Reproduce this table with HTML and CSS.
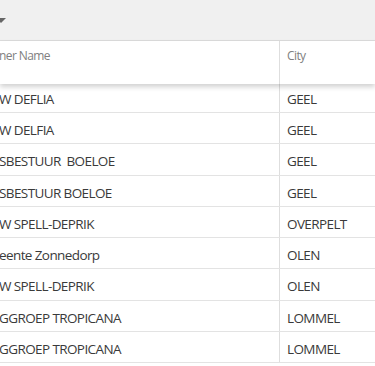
FILE: index.html
```html
<!DOCTYPE html>
<html>
<head>
<meta charset="utf-8">
<link rel="stylesheet" href="styles.css">
</head>
<body>
<div class="toolbar"><span class="caret"></span></div>
<div class="grid">
  <div class="grid-header">
    <div class="cell name head">ner Name</div>
    <div class="cell city head">City</div>
  </div>
  <div class="grid-body">
    <div class="row"><div class="cell name">W DEFLIA</div><div class="cell city">GEEL</div></div>
    <div class="row"><div class="cell name">W DELFIA</div><div class="cell city">GEEL</div></div>
    <div class="row"><div class="cell name">SBESTUUR&nbsp; BOELOE</div><div class="cell city">GEEL</div></div>
    <div class="row"><div class="cell name">SBESTUUR BOELOE</div><div class="cell city">GEEL</div></div>
    <div class="row"><div class="cell name">W SPELL-DEPRIK</div><div class="cell city">OVERPELT</div></div>
    <div class="row"><div class="cell name">eente Zonnedorp</div><div class="cell city">OLEN</div></div>
    <div class="row"><div class="cell name">W SPELL-DEPRIK</div><div class="cell city">OLEN</div></div>
    <div class="row"><div class="cell name">GGROEP TROPICANA</div><div class="cell city">LOMMEL</div></div>
    <div class="row"><div class="cell name">GGROEP TROPICANA</div><div class="cell city">LOMMEL</div></div>
  </div>
</div>
</body>
</html>
```
FILE: styles.css
```css
html, body {
  margin: 0;
  padding: 0;
  background: #ffffff;
  overflow: hidden;
}
body {
  font-family: "Open Sans", "Noto Sans", sans-serif;
  color: #3a3a3a;
  width: 375px;
  height: 366px;
}
.toolbar {
  height: 40px;
  background: #f0f0f0;
  border-bottom: 1px solid #dcdcdc;
  display: flex;
  align-items: flex-start;
}
.caret {
  display: block;
  width: 0;
  height: 0;
  margin-left: -4px;
  margin-top: 18px;
  border-left: 5px solid transparent;
  border-right: 5px solid transparent;
  border-top: 5px solid #666666;
}
.grid-header {
  display: grid;
  grid-template-columns: 280px 1fr;
  height: 43px;
  background: #ffffff;
  position: relative;
  z-index: 1;
  box-shadow: 0 3px 5px rgba(0, 0, 0, 0.18);
}
.grid-body {
  margin-top: -2.25px;
}
.row {
  display: grid;
  grid-template-columns: 280px 1fr;
  height: 31.25px;
  box-sizing: border-box;
  border-bottom: 1px solid #e3e3e3;
}
.cell {
  box-sizing: border-box;
  white-space: nowrap;
  overflow: hidden;
  font-size: 13.5px;
  line-height: 18px;
  padding-top: 8px;
  letter-spacing: -0.6px;
}
.cell.name {
  border-right: 1px solid #dedede;
  padding-left: 0;
  text-indent: -1px;
}
.cell.city {
  padding-left: 7px;
}
.cell.head {
  font-size: 12px;
  color: #808080;
  padding-top: 6px;
  letter-spacing: -0.6px;
}
```
